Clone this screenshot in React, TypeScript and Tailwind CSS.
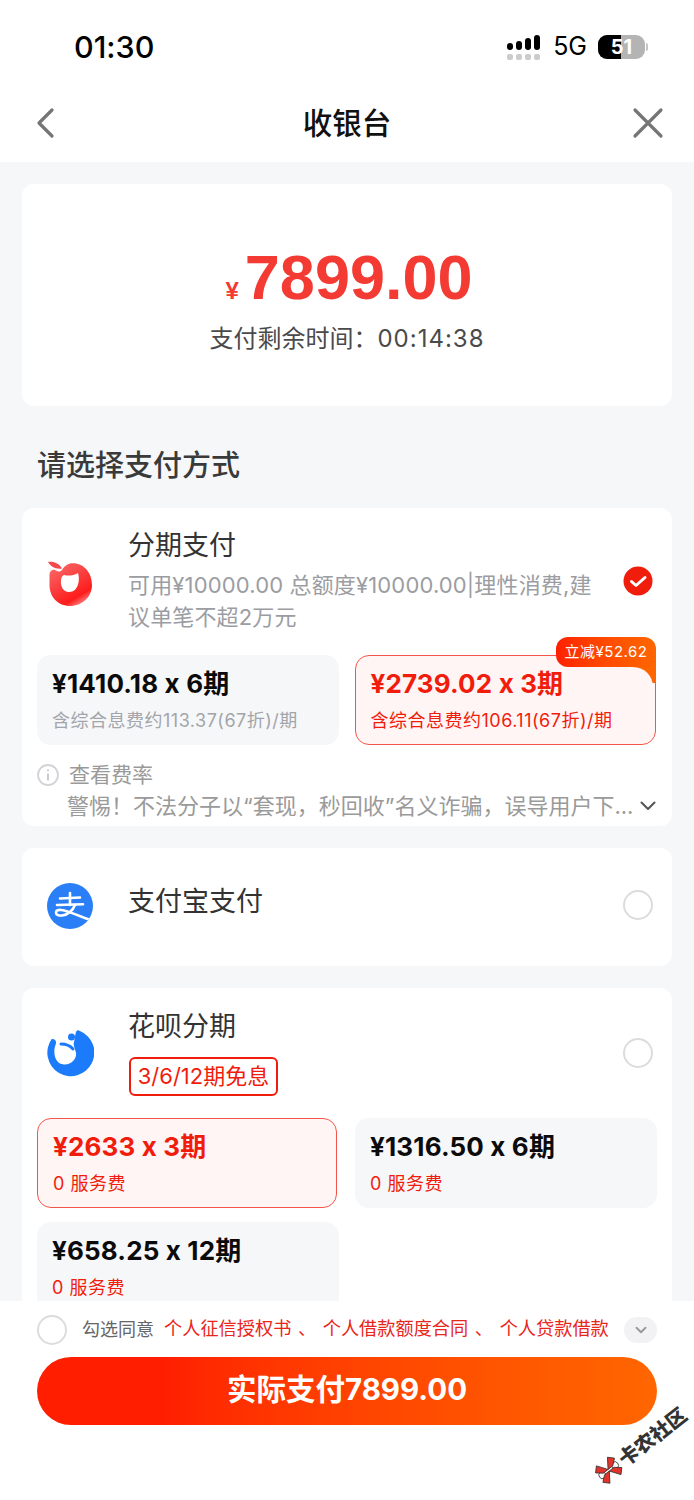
import { ChevronDown } from "lucide-react";

const sans = "font-['Inter','Noto_Sans_CJK_SC',sans-serif] [font-feature-settings:'calt'_0]";

function Radio({ checked = false }: { checked?: boolean }) {
  if (checked) {
    return (
      <svg width="30" height="30" viewBox="0 0 30 30" className="shrink-0">
        <circle cx="15" cy="15" r="14.5" fill="#f01c0c" />
        <path d="M8.5 15.5l4.5 4 9-8" fill="none" stroke="#fff" strokeWidth="3" strokeLinecap="round" strokeLinejoin="round" />
      </svg>
    );
  }
  return <div className="h-[30px] w-[30px] shrink-0 rounded-full border-2 border-[#dcdcdc] bg-white" />;
}

function PeachLogo() {
  return (
    <svg width="47" height="47" viewBox="0 0 47 47">
      <defs>
        <linearGradient id="peach" x1="0.15" y1="0" x2="0.75" y2="1">
          <stop offset="0" stopColor="#fb6a6a" />
          <stop offset="0.45" stopColor="#f93e3e" />
          <stop offset="0.8" stopColor="#ff1c1c" />
          <stop offset="1" stopColor="#fb8f8f" />
        </linearGradient>
      </defs>
      <path d="M1 1c5-1 11 1 14 6.500C9 8.500 4 6 1 1z" fill="#f4484a" />
      <path
        fillRule="evenodd"
        d="M2.500 14C2.500 9 7 8 9 9.500c2 1.500 4 1.500 6-.5 3-5 7-6.700 11-6.700C37 2.300 45 12 45 24c0 12-10 21-22 21C11 45 2.500 36 2.500 24zM17 14c4 1 9 1 14-2 2 6 1 19-9 19-6 0-8.500-6-8-11 .2-3 1-5.500 3-6z"
        fill="url(#peach)"
      />
    </svg>
  );
}

function AlipayLogo() {
  return (
    <svg width="46" height="46" viewBox="0 0 46 46">
      <defs>
        <clipPath id="alipay-disc">
          <circle cx="23" cy="23" r="23" />
        </clipPath>
      </defs>
      <circle cx="23" cy="23" r="23" fill="#2a7ff6" />
      <g fill="none" stroke="#fff" strokeWidth="2.600" strokeLinecap="round" clipPath="url(#alipay-disc)">
        <path d="M13 15.500l20-1" />
        <path d="M10 22l26-.8" />
        <path d="M23 10v12" />
        <path d="M28 22c-2 5-7 10-13 10.500-4 .3-6-1-6-3 0-2 2.500-3 5.500-2.500 8 1 16 6 32 11" />
      </g>
    </svg>
  );
}

function HuabeiLogo() {
  return (
    <svg width="47" height="48" viewBox="0 0 47 48">
      <path
        d="M4.700 10C8 9.500 10 12 8.500 16 6 22 7 35 17 35.500c8 .5 13-6.500 12-11.500-1-5-3-7-2-11 1-4 1-7 2-10 1-2 2-2 4-1A23.500 23.500 0 1 1 4.700 10z"
        fill="#1b7bfb"
      />
      <path d="M14 15c5 0 9 1.500 12 5" fill="none" stroke="#1b7bfb" strokeWidth="3" strokeLinecap="round" />
      <circle cx="24.500" cy="8" r="3.500" fill="#1b7bfb" />
    </svg>
  );
}

function PlanCard({
  title,
  note,
  active = false,
  mutedNote = false,
  badge,
  className = "",
}: {
  title: string;
  note: string;
  active?: boolean;
  mutedNote?: boolean;
  badge?: string;
  className?: string;
}) {
  return (
    <div
      className={`relative flex h-[90px] flex-col justify-center rounded-[14px] pl-[15px] pt-[1px] ${
        active ? "border border-[#f4554a] bg-[#fff5f5]" : "bg-[#f6f7f9]"
      } ${className}`}
    >
      {badge && (
        <>
          {/* the ribbon folds down over the card's top right corner */}
          <div className="absolute right-[-1px] top-[4px] h-[23px] w-[26px] bg-[#ff6600]" />
          <div className="absolute right-[2px] top-[11px] h-[24px] w-[26px] rounded-tr-[20px] bg-[#fff5f5]" />
          <div className="absolute right-[-1px] top-[-19px] h-[30px] w-[100px] rounded-t-[12px] rounded-bl-[12px] bg-gradient-to-r from-[#ff1e00] to-[#ff6600] text-center text-[15px] leading-[30px] tracking-[0.5px] text-white">
            {badge}
          </div>
        </>
      )}
      <p className={`relative text-[26px] font-bold leading-[32px] tracking-[0.15px] ${active ? "text-[#f01c0c]" : "text-[#0b0b0b]"}`}>{title}</p>
      <p className={`mt-[8px] text-[18px] leading-[26px] tracking-[0.5px] ${mutedNote ? "text-[#a3a5aa]" : "text-[#f01c0c]"}`}>{note}</p>
    </div>
  );
}

export default function App() {
  return (
    <div className={`relative flex h-[1500px] w-[694px] flex-col overflow-hidden bg-[#f6f7f9] ${sans}`}>
      {/* status bar + nav */}
      <header className="h-[162px] shrink-0 bg-white">
        <div className="flex h-[93px] items-center justify-between pl-[74px] pr-[46px]">
          <span className="text-[30.5px] font-medium text-black">01:30</span>
          <div className="flex items-center gap-[11px]">
            <svg width="36" height="26" viewBox="0 0 36 26">
              <g fill="#000">
                <rect x="1" y="9" width="6" height="7" rx="3" />
                <rect x="10" y="7" width="6" height="9" rx="3" />
                <rect x="19" y="4" width="6" height="12" rx="3" />
                <rect x="28" y="1" width="6" height="15" rx="3" />
              </g>
              <g fill="#ccc">
                <rect x="1" y="20" width="6" height="6" rx="2" />
                <rect x="10" y="20" width="6" height="6" rx="2" />
                <rect x="19" y="20" width="6" height="6" rx="2" />
                <rect x="28" y="20" width="6" height="6" rx="2" />
              </g>
            </svg>
            <span className="text-[25px] leading-none text-black">5G</span>
            <div className="flex items-center">
              <div className="relative flex h-[24px] w-[47px] items-center justify-center overflow-hidden rounded-[9px] bg-[#b4b4b4] text-[20px] font-bold text-white">
                <div className="absolute inset-y-0 left-0 w-[23px] bg-black" />
                <span className="relative">51</span>
              </div>
              <div className="ml-[1px] h-[8px] w-[2px] rounded-r-full bg-[#c4c4c4]" />
            </div>
          </div>
        </div>
        <div className="flex h-[69px] items-center justify-between pb-[9px] pl-[35px] pr-[30px]">
          <div className="w-[40px]">
            <svg width="20" height="32" viewBox="0 0 20 32">
              <path d="M17 3L4 16l13 13" fill="none" stroke="#757575" strokeWidth="3.200" strokeLinecap="round" strokeLinejoin="round" />
            </svg>
          </div>
          <h1 className="text-[29.5px] font-medium text-[#111]">收银台</h1>
          <svg className="ml-[13px]" width="32" height="32" viewBox="0 0 32 32">
            <path d="M3 3l26 26M29 3L3 29" fill="none" stroke="#757575" strokeWidth="3.200" strokeLinecap="round" />
          </svg>
        </div>
      </header>

      {/* scrolling content */}
      <main className="min-h-0 flex-1 overflow-hidden px-[22px] pt-[22px]">
        <section className="flex h-[222px] flex-col items-center rounded-[12px] bg-white pt-[60px]">
          <div className="flex items-baseline pl-[4px] font-['Liberation_Sans',sans-serif] text-[#f33a33]">
            <span className="mr-[6px] text-[24px] font-bold">¥</span>
            <span className="text-[63px] font-bold leading-[66px]">7899.00</span>
          </div>
          <p className="mt-[12px] text-[24px] leading-[34px] text-[#4a4a4a]">
            支付剩余时间：<span className="tracking-[1px]">00:14:38</span>
          </p>
        </section>

        <h2 className="mb-[23px] mt-[41px] pl-[15px] text-[29px] font-medium leading-[38px] text-[#3a3a3a]">请选择支付方式</h2>

        <section className="h-[318px] overflow-hidden rounded-[12px] bg-white">
          <div className="flex h-[147px] px-[15px]">
            <div className="flex w-[92px] shrink-0 items-start pl-[10px] pt-[53px]">
              <PeachLogo />
            </div>
            <div className="-ml-[1px] w-[472px] pt-[20px]">
              <p className="text-[27px] leading-[36px] text-[#333]">分期支付</p>
              <p className="mt-[5px] text-[22px] leading-[32px] tracking-[0.15px] text-[#9b9da2]">
                可用¥10000.00 总额度¥10000.00|理性消费,建议单笔不超2万元
              </p>
            </div>
            <div className="ml-auto pr-[4px] pt-[58px]">
              <Radio checked />
            </div>
          </div>
          <div className="grid grid-cols-2 gap-x-[16px] pl-[15px] pr-[16px]">
            <PlanCard title="¥1410.18 x 6期" note="含综合息费约113.37(67折)/期" mutedNote />
            <PlanCard title="¥2739.02 x 3期" note="含综合息费约106.11(67折)/期" active badge="立减¥52.62" />
          </div>
          <div className="mt-[15px] flex items-center pl-[15px]">
            <svg width="22" height="22" viewBox="0 0 22 22" className="shrink-0">
              <circle cx="11" cy="11" r="10" fill="none" stroke="#d2d3d8" strokeWidth="1.800" />
              <path d="M11 9.500v7M11 5.500v1.800" stroke="#c4c5ca" strokeWidth="1.800" />
            </svg>
            <span className="ml-[10px] text-[21px] leading-[30px] text-[#9a9a9a]">查看费率</span>
          </div>
          <div className="flex items-center justify-between pl-[45px] pr-[16px]">
            <p className="whitespace-nowrap text-[22px] leading-[32px] text-[#9a9a9a]">
              警惕！不法分子以“套现，秒回收”名义诈骗，误导用户下...
            </p>
            <svg width="16" height="10" viewBox="0 0 16 10" className="shrink-0">
              <path d="M1.500 1.500L8 8l6.500-6.500" fill="none" stroke="#555" strokeWidth="2" strokeLinecap="round" strokeLinejoin="round" />
            </svg>
          </div>
        </section>

        <section className="mt-[22px] flex h-[118px] items-start rounded-[12px] bg-white pl-[25px] pr-[19px]">
          <div className="mt-[35px]">
            <AlipayLogo />
          </div>
          <p className="ml-[35px] mt-[36px] text-[27px] leading-[36px] text-[#333]">支付宝支付</p>
          <div className="ml-auto mt-[42px]">
            <Radio />
          </div>
        </section>

        <section className="mt-[22px] rounded-[12px] bg-white pb-[20px]">
          <div className="flex h-[130px] items-start pl-[25px] pr-[19px]">
            <div className="mt-[41px]">
              <HuabeiLogo />
            </div>
            <div className="ml-[35px] mt-[21px]">
              <p className="-ml-[1px] text-[27px] leading-[36px] text-[#333]">花呗分期</p>
              <div className="mt-[12px] flex h-[39px] w-[149px] items-center justify-center rounded-[6px] border-2 border-[#f01c0c] text-[22px] text-[#f01c0c]">
                3/6/12期免息
              </div>
            </div>
            <div className="ml-auto mt-[50px]">
              <Radio />
            </div>
          </div>
          <div className="grid grid-cols-[300px_302px] gap-x-[18px] gap-y-[14px] pl-[15px]">
            <PlanCard title="¥2633 x 3期" note="0 服务费" active />
            <PlanCard title="¥1316.50 x 6期" note="0 服务费" />
            <PlanCard title="¥658.25 x 12期" note="0 服务费" className="w-[302px]" />
          </div>
        </section>
      </main>

      {/* agreement + pay button */}
      <footer className="h-[199px] shrink-0 bg-white px-[37px] pt-[14px]">
        <div className="flex h-[30px] items-center">
          <div className="h-[30px] w-[30px] shrink-0 rounded-full border-2 border-[#dcdcdc]" />
          <span className="mb-[2px] ml-[15px] whitespace-nowrap text-[18px] text-[#666]">勾选同意</span>
          <span className="mb-[2px] ml-[10px] whitespace-nowrap text-[18.2px] text-[#e8261c] [word-spacing:1.5px]">
            个人征信授权书 、 个人借款额度合同 、 个人贷款借款
          </span>
          <div className="ml-auto flex h-[26px] w-[33px] shrink-0 items-center justify-center rounded-[13px] bg-[#f2f2f4]">
            <ChevronDown size={18} color="#999" strokeWidth={2.500} />
          </div>
        </div>
        <button className="mt-[12px] h-[68px] w-full rounded-[34px] bg-gradient-to-r from-[#ff1e00] from-20% to-[#ff6600] pb-[3px] text-[29.5px] font-bold text-white">
          实际支付7899.00
        </button>
      </footer>

      {/* forum watermark */}
      <div className="absolute left-[587px] top-[1432px] flex -rotate-[38deg] items-center">
        <svg width="26" height="26" viewBox="0 0 26 26" className="shrink-0">
          <circle cx="5" cy="13" r="3.500" fill="#fff" stroke="#333" strokeWidth="0.800" />
          <circle cx="21" cy="13" r="3.500" fill="#fff" stroke="#333" strokeWidth="0.800" />
          <path d="M13 12L6 2 1 7l6 5zM13 12l7-10 5 5-6 5zM13 14l-7 10-5-5 6-5zM13 14l7 10 5-5-6-5z" fill="#e2332b" stroke="#333" strokeWidth="0.800" />
        </svg>
        <span className="ml-[2px] whitespace-nowrap font-['Noto_Sans_CJK_SC',sans-serif] text-[20px] font-black leading-none text-[#333]">卡农社区</span>
      </div>
    </div>
  );
}
